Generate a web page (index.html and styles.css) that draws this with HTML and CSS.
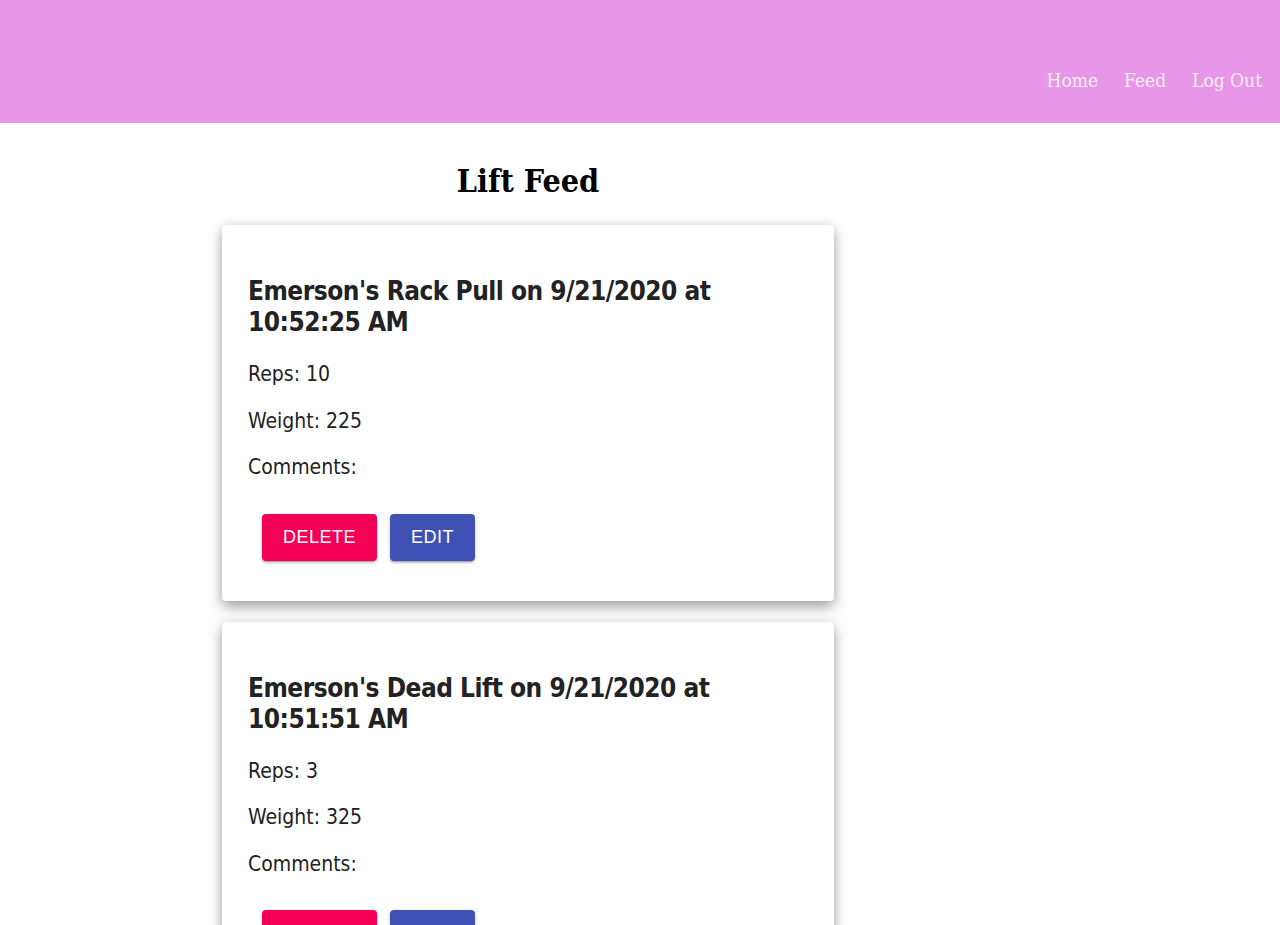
FILE: index.html
```html
<!DOCTYPE html>
<html>
<head>
<meta charset="utf-8">
<link rel="stylesheet" href="styles.css">
</head>
<body>
<header class="topbar">
  <nav class="nav">
    <a class="nav-link" href="#">Home</a>
    <a class="nav-link" href="#">Feed</a>
    <a class="nav-link" href="#">Log Out</a>
  </nav>
</header>
<main class="layout">
  <section class="feed">
    <h1 class="feed-title">Lift Feed</h1>
    <article class="card">
      <h2 class="card-title">Emerson's Rack Pull on 9/21/2020 at 10:52:25 AM</h2>
      <p class="card-line">Reps: 10</p>
      <p class="card-line">Weight: 225</p>
      <p class="card-line">Comments:</p>
      <div class="actions">
        <button class="btn btn-delete">DELETE</button>
        <button class="btn btn-edit">EDIT</button>
      </div>
    </article>
    <article class="card">
      <h2 class="card-title">Emerson's Dead Lift on 9/21/2020 at 10:51:51 AM</h2>
      <p class="card-line">Reps: 3</p>
      <p class="card-line">Weight: 325</p>
      <p class="card-line">Comments:</p>
      <div class="actions">
        <button class="btn btn-delete">DELETE</button>
        <button class="btn btn-edit">EDIT</button>
      </div>
    </article>
  </section>
</main>
</body>
</html>
```
FILE: styles.css
```css
html, body {
  margin: 0;
  padding: 0;
  background: #fff;
}
body {
  font-family: "DejaVu Sans", sans-serif;
  overflow: hidden;
}
.topbar {
  height: 123px;
  background: #e896e8;
  display: flex;
  justify-content: flex-end;
  align-items: flex-end;
}
.nav {
  display: flex;
  gap: 26px;
  padding: 0 18px 32px 0;
}
.nav-link {
  font-family: "DejaVu Serif", serif;
  font-stretch: condensed;
  font-size: 19px;
  color: #f4eef4;
  text-decoration: none;
}
.layout {
  display: grid;
  grid-template-columns: 1056px 1fr;
}
.feed {
  display: flex;
  flex-direction: column;
  align-items: center;
  padding-bottom: 40px;
}
.feed-title {
  font-family: "DejaVu Serif", serif;
  font-stretch: condensed;
  font-size: 32px;
  font-weight: bold;
  margin: 38px 0 24px;
  color: #000;
  line-height: 40px;
}
.card {
  width: 560px;
  padding: 26px 26px 40px;
  background: #fff;
  border-radius: 4px;
  box-shadow: 0 6px 14px rgba(0,0,0,0.35), 0 0 10px rgba(0,0,0,0.08);
  margin-bottom: 21px;
  color: #222;
}
.card-title {
  font-family: "DejaVu Sans", sans-serif;
  font-stretch: condensed;
  font-size: 26px;
  font-weight: bold;
  line-height: 31px;
  margin: 25px 0 24px;
  letter-spacing: -0.5px;
}
.card-line {
  font-family: "DejaVu Sans", sans-serif;
  font-stretch: condensed;
  font-size: 21px;
  line-height: 25.5px;
  margin: 0 0 21px;
}
.actions {
  display: flex;
  gap: 13px;
  padding: 12px 14px 0;
}
.btn {
  border: 0;
  border-radius: 4px;
  height: 47px;
  padding: 0 20px;
  font-family: "Liberation Sans", Arial, sans-serif;
  font-size: 18px;
  letter-spacing: 0.5px;
  color: #fff;
  box-shadow: 0 3px 1px -2px rgba(0,0,0,0.2), 0 2px 2px 0 rgba(0,0,0,0.14), 0 1px 5px 0 rgba(0,0,0,0.12);
}
.btn-delete {
  background: #f50057;
  width: 115px;
}
.btn-edit {
  background: #3f51b5;
  width: 85px;
}
```
